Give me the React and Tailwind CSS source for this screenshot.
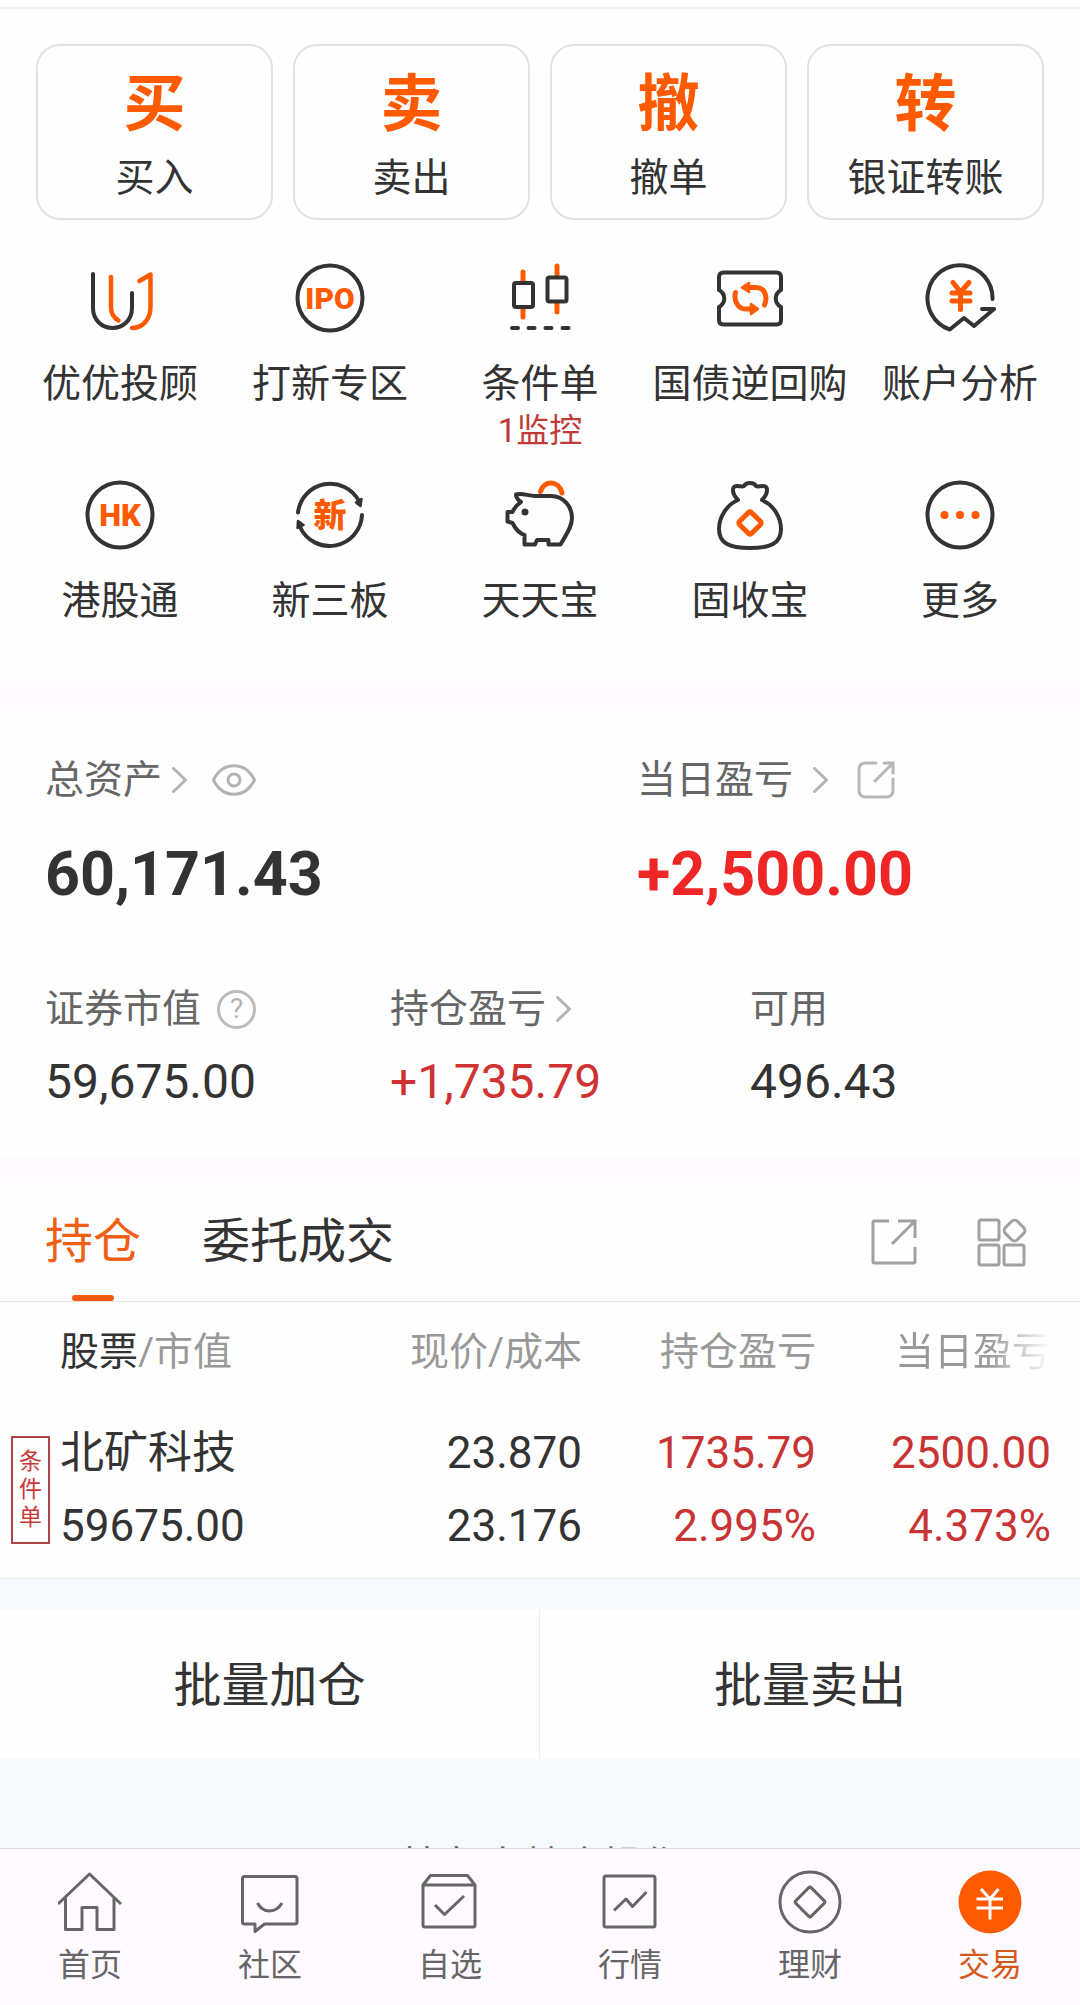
import React, { useState } from "react";

const DARK = "#333333";
const ORANGE = "#ff5a00";

const tradeActions = [
  { mark: "买", label: "买入" },
  { mark: "卖", label: "卖出" },
  { mark: "撤", label: "撤单" },
  { mark: "转", label: "银证转账" },
];

// 72x72 icons for the service grid
function ServiceIcon({ children }) {
  return (
    <svg
      width="72"
      height="72"
      viewBox="0 0 72 72"
      fill="none"
      stroke={DARK}
      strokeWidth="4"
      strokeLinecap="round"
      strokeLinejoin="round"
      aria-hidden="true"
    >
      {children}
    </svg>
  );
}

function IconText({ size, y, children }) {
  return (
    <text
      x="36"
      y={y}
      textAnchor="middle"
      fontSize={size}
      fontWeight="900"
      fill={ORANGE}
      stroke="none"
      className="font-['Roboto','Noto_Sans_CJK_SC',sans-serif]"
    >
      {children}
    </text>
  );
}

const services = [
  {
    label: "优优投顾",
    icon: (
      <ServiceIcon>
        <path d="M9 12V46C9 58 18 66 28.5 66S48 58 48 46V31" />
        <path d="M27 15V45C27 52 30 56 34.5 58.5M55.500 19L66.5 12.500V45C66.5 58 58 66 48 66" stroke={ORANGE} strokeWidth="4.500" />
      </ServiceIcon>
    ),
  },
  {
    label: "打新专区",
    icon: (
      <ServiceIcon>
        <circle cx="36" cy="36" r="32.5" />
        <IconText size="30" y="47">IPO</IconText>
      </ServiceIcon>
    ),
  },
  {
    label: "条件单",
    note: "1监控",
    icon: (
      <ServiceIcon>
        <path d="M19 10V19M19 47V55M53 4V13M53 42V50" stroke={ORANGE} strokeWidth="5" />
        <rect x="10" y="21" width="19" height="24" rx="2" />
        <rect x="43.5" y="15.5" width="19" height="24" rx="2" />
        <path d="M8 66H14M24.500 66H30.500M41.500 66H47.500M58.500 66H64.500" />
      </ServiceIcon>
    ),
  },
  {
    label: "国债逆回购",
    icon: (
      <ServiceIcon>
        <path d="M5 28V15Q5 10.500 9.500 10.500H62.500Q67 10.500 67 15V28C60 32 60 41 67 45V58Q67 62.500 62.500 62.500H9.500Q5 62.500 5 58V45C12 41 12 32 5 28Z" />
        <path d="M35 25.500H42C51 25.500 54 35 50.500 43M21.500 30.500C19.500 39 24 47 32 47H37" stroke={ORANGE} strokeWidth="5" />
        <path d="M28 25.500L35 21V30ZM44 47L37 42V52Z" fill={ORANGE} stroke={ORANGE} strokeWidth="2.500" />
      </ServiceIcon>
    ),
  },
  {
    label: "账户分析",
    icon: (
      <ServiceIcon>
        <path d="M68.500 37A32.500 33 0 1 0 25.800 67.500L40 56L50 64L70 47H58" />
        <path d="M29 20.500L36.500 30L45 20.500M28 31H46M28 39H46M36.500 30V47.500" stroke={ORANGE} strokeWidth="5" />
      </ServiceIcon>
    ),
  },
  {
    label: "港股通",
    icon: (
      <ServiceIcon>
        <circle cx="36" cy="36" r="32.5" />
        <IconText size="31" y="47">HK</IconText>
      </ServiceIcon>
    ),
  },
  {
    label: "新三板",
    icon: (
      <ServiceIcon>
        <path d="M4 33.500A32.500 32.500 0 0 1 65 22M68 36A32.500 32.500 0 0 1 6 48" />
        <path d="M66.500 27L62 23.500L67.500 20ZM4 42L9.500 46L3.500 49Z" fill={DARK} strokeWidth="2.500" />
        <IconText size="33" y="48">新</IconText>
      </ServiceIcon>
    ),
  },
  {
    label: "天天宝",
    icon: (
      <ServiceIcon>
        <path d="M17 23C14 21 12 19 12 15.500C18 13.500 24 17 31 17H47C60 17 68 28 68 39C68 48 62 56 56.500 65.500H44.500V61H33L31 65.500H20.500V56C14 54 11 49 8.500 44L3.500 42.500V33H8.500C10 29 13 26 17 23Z" />
        <circle cx="21" cy="33" r="2.500" fill={DARK} strokeWidth="2" />
        <path d="M36.500 12.500C40 1 55 1 58 14" stroke={ORANGE} strokeWidth="5" />
      </ServiceIcon>
    ),
  },
  {
    label: "固收宝",
    icon: (
      <ServiceIcon>
        <path d="M24 21C18 15 17 7 23 7C26 7 28 8 30 7C32 3 40 3 42 7C44 8 46 7 49 7C55 7 54 15 48 21C60 26 67 39 67 50C67 64 57 69 36 69S5 64 5 50C5 39 12 26 24 21Z" />
        <rect x="27.500" y="35.500" width="17" height="17" rx="2" transform="rotate(45 36 44)" stroke={ORANGE} strokeWidth="5" />
      </ServiceIcon>
    ),
  },
  {
    label: "更多",
    icon: (
      <ServiceIcon>
        <circle cx="36" cy="36" r="32.5" />
        <g fill={ORANGE} stroke="none">
          <circle cx="20.5" cy="36" r="4" />
          <circle cx="36" cy="36" r="4" />
          <circle cx="51.5" cy="36" r="4" />
        </g>
      </ServiceIcon>
    ),
  },
];

// 64x64 icons for the bottom bar
function NavIcon({ children }) {
  return (
    <svg
      width="64"
      height="64"
      viewBox="0 0 64 64"
      fill="none"
      stroke="#666666"
      strokeWidth="3"
      strokeLinejoin="round"
      aria-hidden="true"
    >
      {children}
    </svg>
  );
}

const navItems = [
  {
    label: "首页",
    icon: (
      <NavIcon>
        <path d="M0 34L31.500 4L63 34M7.500 28V59.500H24V37.500H39V59.500H56V28" />
      </NavIcon>
    ),
  },
  {
    label: "社区",
    icon: (
      <NavIcon>
        <path d="M6.500 6.500H57Q59 6.500 59 8.500V52Q59 54 57 54H26.500L17 61.500V54H6.500Q4.500 54 4.500 52V8.500Q4.500 6.500 6.500 6.500Z" />
        <path d="M19.500 33C25 43.500 38 43.500 44 33" />
      </NavIcon>
    ),
  },
  {
    label: "自选",
    icon: (
      <NavIcon>
        <path d="M5 15L12.500 5.500H49.500L57 15V55Q57 57 55 57H7Q5 57 5 55ZM5 15H57" />
        <path d="M17 35L26.500 44.500L46 26" />
      </NavIcon>
    ),
  },
  {
    label: "行情",
    icon: (
      <NavIcon>
        <rect x="6" y="6" width="51" height="51" rx="2" />
        <path d="M16 40.500L28 29L34.500 36.500L48.500 22" />
      </NavIcon>
    ),
  },
  {
    label: "理财",
    icon: (
      <NavIcon>
        <circle cx="32" cy="32" r="30" />
        <rect x="21" y="21" width="22" height="22" rx="2" transform="rotate(45 32 32)" />
      </NavIcon>
    ),
  },
  {
    label: "交易",
    active: true,
    icon: (
      <NavIcon>
        <circle cx="32" cy="32" r="31.5" fill={ORANGE} stroke="none" />
        <path d="M23 19L32 29L40.500 19M18.500 29H45M18.500 38H45M32 29V49.500" stroke="#ffffff" />
      </NavIcon>
    ),
  },
];

function Chevron() {
  return (
    <svg width="16" height="26" viewBox="0 0 16 26" fill="none" stroke="#b3b3b3" strokeWidth="3" aria-hidden="true">
      <path d="M1.500 1.500L13.500 13L1.500 24.500" strokeLinecap="round" strokeLinejoin="round" />
    </svg>
  );
}

function Eye() {
  return (
    <svg width="44" height="32" viewBox="0 0 44 32" fill="none" stroke="#b3b3b3" strokeWidth="3" aria-hidden="true">
      <path d="M1.500 16C11 -3 33 -3 42.500 16C33 35 11 35 1.500 16Z" strokeLinejoin="round" />
      <circle cx="22" cy="16" r="6" />
    </svg>
  );
}

function Share() {
  return (
    <svg width="38" height="38" viewBox="0 0 38 38" fill="none" stroke="#b8b4b8" strokeWidth="3" aria-hidden="true">
      <path d="M19 2H9Q2 2 2 9V29Q2 36 9 36H29Q36 36 36 29V18" strokeLinecap="round" />
      <path d="M27 2H36V12M36 2L18 20" strokeLinecap="round" />
    </svg>
  );
}

function ShareSquare() {
  return (
    <svg width="46" height="46" viewBox="0 0 46 46" fill="none" stroke="#a0a0a0" strokeWidth="3" aria-hidden="true">
      <path d="M18 2H3.500Q2 2 2 3.500V42.500Q2 44 3.500 44H42.500Q44 44 44 42.500V28" />
      <path d="M27 2H44V19M44 2L21 25" />
    </svg>
  );
}

function Widgets() {
  return (
    <svg width="50" height="50" viewBox="0 0 50 50" fill="none" stroke="#a0a0a0" strokeWidth="3" aria-hidden="true">
      <rect x="2" y="3" width="20" height="20" rx="2" />
      <rect x="2" y="28" width="20" height="20" rx="2" />
      <rect x="27" y="28" width="20" height="20" rx="2" />
      <rect x="29" y="5" width="17" height="17" rx="4" transform="rotate(45 37.500 13.500)" />
    </svg>
  );
}

function Divider() {
  return <div className="h-6 shrink-0 bg-[#fffaff]"></div>;
}

export default function App() {
  const [tab, setTab] = useState("持仓");

  return (
    <div className="flex h-screen flex-col bg-[#fefefe] font-['Roboto','Noto_Sans_CJK_SC',sans-serif] text-[#333333]">
      <main className="min-h-0 flex-1 overflow-y-auto">
        <div className="h-[9px] border-b-2 border-[#f2f2f2]"></div>

        {/* trade actions */}
        <section className="grid grid-cols-4 gap-5 px-9 pt-[35px]">
          {tradeActions.map((item) => (
            <button
              key={item.mark}
              className="flex flex-col items-center rounded-3xl border-2 border-[#e2e2e4] pt-[29px] pb-5"
            >
              <span className="text-[62px] leading-[60px] font-bold text-[#ff5a00]">{item.mark}</span>
              <span className="mt-[23px] text-[39px] leading-10">{item.label}</span>
            </button>
          ))}
        </section>

        {/* services */}
        <section className="grid grid-cols-5 gap-y-[30px] px-[15px] pt-[42px] pb-[63px]">
          {services.map((item) => (
            <button key={item.label} className="flex flex-col items-center justify-start whitespace-nowrap">
              {item.icon}
              <span className="mt-[30px] text-[39px] leading-10">{item.label}</span>
              {item.note && <span className="mt-[9px] text-[33px] leading-9 text-[#c03a3a]">{item.note}</span>}
            </button>
          ))}
        </section>

        <Divider />

        {/* assets */}
        <section className="pt-[52px] pr-9 pb-[51px] pl-[45px]">
          <div className="flex">
            <div className="w-[592px]">
              <div className="flex items-center text-[39px] leading-10 text-[#666666]">
                <span>总资产</span>
                <span className="ml-2.5"><Chevron /></span>
                <button className="ml-6" aria-label="隐藏金额"><Eye /></button>
              </div>
              <p className="mt-11 text-[61px] leading-[60px] font-bold">60,171.43</p>
            </div>
            <div className="flex-1">
              <div className="flex items-center text-[39px] leading-10 text-[#666666]">
                <span>当日盈亏</span>
                <span className="ml-5"><Chevron /></span>
                <button className="ml-7" aria-label="分享"><Share /></button>
              </div>
              <p className="mt-11 text-[61px] leading-[60px] font-bold text-[#ee2626]">+2,500.00</p>
            </div>
          </div>

          <div className="mt-[85px] flex">
            <div className="w-[345px]">
              <div className="flex items-center text-[39px] leading-10 text-[#666666]">
                <span>证券市值</span>
                <button
                  className="ml-4 flex size-[39px] items-center justify-center rounded-full border-3 border-[#bcbcbc] text-[28px] leading-none text-[#b3b3b3]"
                >
                  ?
                </button>
              </div>
              <p className="mt-[29px] text-[48px] leading-[48px]">59,675.00</p>
            </div>
            <div className="w-[360px]">
              <div className="flex items-center text-[39px] leading-10 text-[#666666]">
                <span>持仓盈亏</span>
                <span className="ml-2.5"><Chevron /></span>
              </div>
              <p className="mt-[29px] text-[48px] leading-[48px] text-[#d03232]">+1,735.79</p>
            </div>
            <div className="flex-1">
              <div className="text-[39px] leading-10 text-[#666666]">可用</div>
              <p className="mt-[29px] text-[48px] leading-[48px]">496.43</p>
            </div>
          </div>
        </section>

        <Divider />

        {/* tabs */}
        <div className="flex items-start border-b border-[#e2e2e2] pr-[53px] pl-[45px]">
          <div className="flex flex-1 gap-[61px]">
            {["持仓", "委托成交"].map((name) => (
              <button key={name} onClick={() => setTab(name)} className="flex flex-col items-center pt-[37px]">
                <span className={tab === name ? "text-5xl/[48px] text-[#f06014]" : "text-5xl/[48px]"}>{name}</span>
                {tab === name && <span className="mt-[29px] h-1.5 w-[42px] rounded-full bg-[#f35a10]"></span>}
              </button>
            ))}
          </div>
          <div className="flex items-center gap-[60px] pt-9">
            <button aria-label="分享持仓"><ShareSquare /></button>
            <button aria-label="更多功能"><Widgets /></button>
          </div>
        </div>

        {/* holdings */}
        <table className="w-full table-fixed border-b border-[#ebebeb]">
          <colgroup>
            <col />
            <col className="w-[214px]" />
            <col className="w-[234px]" />
            <col className="w-[264px]" />
          </colgroup>
          <thead>
            <tr className="text-right text-[39px] leading-10 whitespace-nowrap text-[#999999]">
              <th className="pt-[30px] pb-7 pl-[60px] text-left font-normal">
                <span className="text-[#333333]">股票</span>/市值
              </th>
              <th className="pt-[30px] pb-7 font-normal">现价/成本</th>
              <th className="pt-[30px] pb-7 font-normal">持仓盈亏</th>
              <th className="pt-[30px] pr-[29px] pb-7 font-normal">
                <span className="bg-linear-to-r from-[#999999] from-60% to-[#fefefe] bg-clip-text text-transparent">
                  当日盈亏
                </span>
              </th>
            </tr>
          </thead>
          <tbody>
            <tr className="text-right text-[44px] leading-[73px]">
              <td className="pt-[17px] pb-[15px] pl-[11px] text-left">
                <div className="flex items-center gap-2.5">
                  <span className="flex w-[39px] flex-col items-center border-2 border-[#b04444] py-2.5 text-[23px] leading-7 text-[#c83a3a]">
                    <span>条</span>
                    <span>件</span>
                    <span>单</span>
                  </span>
                  <div>
                    <div>北矿科技</div>
                    <div>59675.00</div>
                  </div>
                </div>
              </td>
              <td className="pt-[17px] pb-[15px]">
                <div>23.870</div>
                <div>23.176</div>
              </td>
              <td className="pt-[17px] pb-[15px] text-[#c83434]">
                <div>1735.79</div>
                <div>2.995%</div>
              </td>
              <td className="pt-[17px] pr-[29px] pb-[15px] text-[#c83434]">
                <div>2500.00</div>
                <div>4.373%</div>
              </td>
            </tr>
          </tbody>
        </table>

        {/* batch actions */}
        <div className="bg-[#f6faff] pt-[30px]">
          <div className="grid grid-cols-2 bg-[#fefefe]">
            <button className="border-r border-[#ececec] pt-[53px] pb-[49px] text-5xl/[48px]">批量加仓</button>
            <button className="pt-[53px] pb-[49px] text-5xl/[48px]">批量卖出</button>
          </div>
          <p className="pt-[87px] pb-6 text-center text-[39px] leading-10 text-[#666666]">其它 在持仓操作</p>
        </div>
      </main>

      <nav className="grid shrink-0 grid-cols-6 border-t border-[#dedede] bg-[#fffaff] pt-[21px] pb-6">
        {navItems.map((item) => (
          <a
            key={item.label}
            href="#"
            className={
              item.active
                ? "flex flex-col items-center text-[32px] leading-8 text-[#d4591c]"
                : "flex flex-col items-center text-[32px] leading-8 text-[#666666]"
            }
          >
            {item.icon}
            <span className="mt-[15px]">{item.label}</span>
          </a>
        ))}
      </nav>
    </div>
  );
}
